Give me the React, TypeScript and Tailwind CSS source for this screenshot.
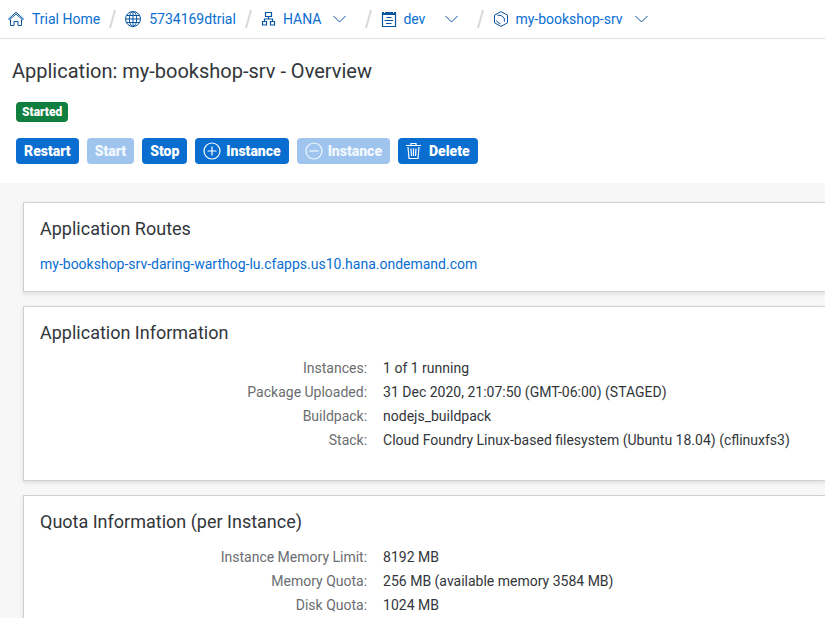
import type { ReactNode } from "react";

const iconProps = {
  width: 16,
  height: 16,
  viewBox: "0 0 16 16",
  fill: "none",
  stroke: "currentColor",
  strokeWidth: 1,
  "aria-hidden": true,
  className: "shrink-0",
} as const;

function HomeIcon() {
  return (
    <svg {...iconProps}>
      <path d="M.5 8 8 1.2 15.500 8l-1 .8L8 3 1.500 8.800z" />
      <path d="M2.500 8.500v6h3.500v-4h4v4h3.500v-6" />
    </svg>
  );
}

function GlobeIcon() {
  return (
    <svg {...iconProps}>
      <circle cx="8" cy="8" r="7.500" />
      <ellipse cx="8" cy="8" rx="3.700" ry="7.500" />
      <path d="M8 .5v15M.5 8h15M1.700 4.500h12.600M1.700 11.500h12.600" />
    </svg>
  );
}

function OrgChartIcon() {
  return (
    <svg {...iconProps}>
      <path d="M4.500 1.500h6v4h-6zM1.500 10.500h4v3.500h-4zM9.500 10.500h4v3.500h-4zM7.500 5.500V8M3.500 10.500V8h8v2.500" strokeWidth="1.200" />
    </svg>
  );
}

function SpaceIcon() {
  return (
    <svg {...iconProps}>
      <path d="M1.500 2v13.500h13V2" strokeWidth="1.200" />
      <path d="M1 1h14v3H1z" fill="currentColor" stroke="none" />
      <path d="M3.500 0v2M12.500 0v2" stroke="#fff" />
      <path d="M5.500 6.500h5M3.500 9.500h8.500M5 12.500h5.500" strokeWidth="1.200" />
    </svg>
  );
}

function AppIcon() {
  return (
    <svg {...iconProps}>
      <path d="M8 .6 14.500 4.200v7.600L8 15.400l-6.500-3.600V4.200z" />
      <path d="M4.500 4.200 8 4.500l3.200 2.500.3 3.500M3.500 9.500l1 1.700 3 1.600" />
    </svg>
  );
}

function PlusIcon({ minus = false }: { minus?: boolean }) {
  return (
    <svg {...iconProps} width={18} height={18} viewBox="0 0 18 18" strokeWidth={1.200}>
      <circle cx="9" cy="9" r="8" />
      <path d={minus ? "M4.500 9h9" : "M4.500 9h9M9 4.500v9"} />
    </svg>
  );
}

function TrashIcon() {
  return (
    <svg {...iconProps} width={18} height={18} viewBox="0 0 18 18">
      <path d="M0 3.500h15M5 3v-1.500h5V3M2 5l1 11.500h9L13 5M5 6.500l.5 7.500M7.500 6.500V14M10 6.500 9.500 14" strokeWidth="1.200" />
    </svg>
  );
}

function Crumb({ icon, text, menu = false }: { icon: ReactNode; text: string; menu?: boolean }) {
  return (
    <li className="group flex items-center">
      <a href="#" className={menu ? "flex items-center gap-[6px] text-[#0a6ed1]" : "flex items-center gap-2 text-[#0a6ed1]"}>
        <span className="text-[#0854a0]">{icon}</span>
        <span className={menu ? "min-w-[30px]" : ""}>{text}</span>
      </a>
      {menu && (
        <button type="button" aria-label={`Switch ${text}`} className="mr-[10px] ml-3 text-[#0854a0]">
          <svg width="13" height="8" viewBox="0 0 13 8" fill="none" stroke="currentColor" strokeWidth="1" aria-hidden="true">
            <path d="M.5 1l6 6 6-6" />
          </svg>
        </button>
      )}
      <svg width="7" height="18" viewBox="0 0 7 18" className="mx-[9px] group-last:hidden" aria-hidden="true">
        <path d="M6 0 1 18" stroke="#d9d9d9" strokeWidth="2" />
      </svg>
    </li>
  );
}

function ActionButton({ children, disabled = false }: { children: ReactNode; disabled?: boolean }) {
  return (
    <button
      type="button"
      disabled={disabled}
      className="flex h-[26px] items-center gap-[5px] rounded bg-[#0a6ed1] px-2 text-sm font-black text-white disabled:bg-[#9fc5ee] disabled:text-[#f2f8fe]"
    >
      {children}
    </button>
  );
}

function Card({ title, children }: { title: string; children: ReactNode }) {
  return (
    <section className="border border-r-0 border-[#d0d0d0] bg-white pl-4 shadow-[0_2px_4px_rgba(0,0,0,0.1)]">
      <h2 className="pt-3 text-lg leading-7">{title}</h2>
      {children}
    </section>
  );
}

function Details({ rows }: { rows: [string, string][] }) {
  return (
    <dl className="pt-[9px] pb-7">
      {rows.map(([label, value]) => (
        <div key={label} className="flex gap-4 leading-6">
          <dt className="w-5/12 shrink-0 text-right text-[#6a6d70]">{label}:</dt>
          <dd className="whitespace-nowrap">{value}</dd>
        </div>
      ))}
    </dl>
  );
}

export default function App() {
  return (
    <div className="flex h-screen flex-col overflow-hidden bg-[#f7f7f7] font-['Roboto',sans-serif] text-sm text-[#32363a]">
      <nav aria-label="Breadcrumb" className="shrink-0 border-b border-[#e0e0e0] bg-white">
        <ol className="flex h-[38px] items-center whitespace-nowrap pl-2">
          <Crumb icon={<HomeIcon />} text="Trial Home" />
          <Crumb icon={<GlobeIcon />} text="5734169dtrial" />
          <Crumb icon={<OrgChartIcon />} text="HANA" menu />
          <Crumb icon={<SpaceIcon />} text="dev" menu />
          <Crumb icon={<AppIcon />} text="my-bookshop-srv" menu />
        </ol>
      </nav>
      <header className="shrink-0 bg-white px-3 pt-[18px] pb-[19px]">
        <h1 className="text-xl leading-7">Application: my-bookshop-srv - Overview</h1>
        <div className="px-1 pt-[17px]">
          <span className="flex h-5 w-fit items-center rounded bg-[#107e3e] px-[6px] text-xs font-black text-white">Started</span>
          <div className="flex gap-2 pt-4">
            <ActionButton>Restart</ActionButton>
            <ActionButton disabled>Start</ActionButton>
            <ActionButton>Stop</ActionButton>
            <ActionButton><PlusIcon />Instance</ActionButton>
            <ActionButton disabled><PlusIcon minus />Instance</ActionButton>
            <ActionButton><TrashIcon />Delete</ActionButton>
          </div>
        </div>
      </header>
      <main className="flex flex-col gap-[14px] pt-[19px] pl-[23px]">
        <Card title="Application Routes">
          <p className="pt-[11px] pb-[17px] leading-5">
            <a href="#" className="text-[#0a6ed1]">my-bookshop-srv-daring-warthog-lu.cfapps.us10.hana.ondemand.com</a>
          </p>
        </Card>
        <Card title="Application Information">
          <Details
            rows={[
              ["Instances", "1 of 1 running"],
              ["Package Uploaded", "31 Dec 2020, 21:07:50 (GMT-06:00) (STAGED)"],
              ["Buildpack", "nodejs_buildpack"],
              ["Stack", "Cloud Foundry Linux-based filesystem (Ubuntu 18.04) (cflinuxfs3)"],
            ]}
          />
        </Card>
        <Card title="Quota Information (per Instance)">
          <Details
            rows={[
              ["Instance Memory Limit", "8192 MB"],
              ["Memory Quota", "256 MB (available memory 3584 MB)"],
              ["Disk Quota", "1024 MB"],
            ]}
          />
        </Card>
      </main>
    </div>
  );
}
